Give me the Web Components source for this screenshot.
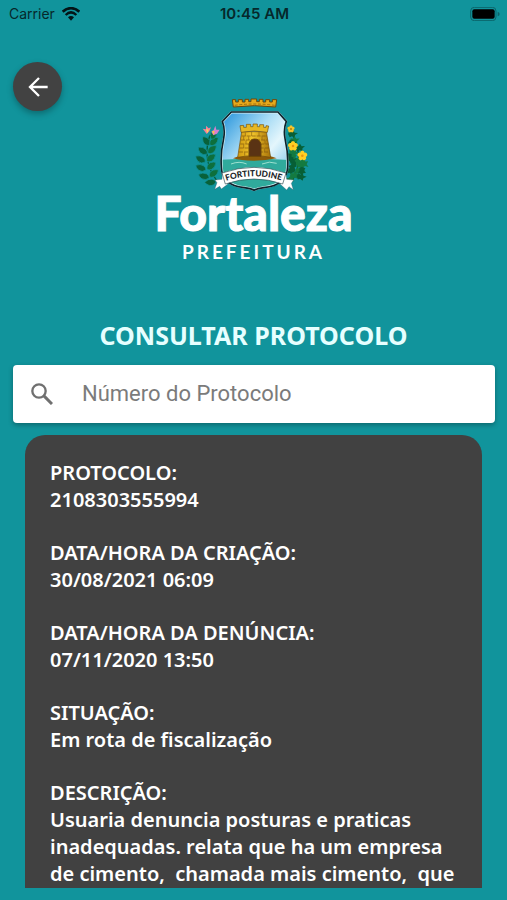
<!DOCTYPE html>
<html lang="pt-BR">
<head>
<meta charset="utf-8">
<meta name="viewport" content="width=device-width, initial-scale=1">
<title>Consultar Protocolo</title>
<style>
  html, body { height: 100%; }
  body { margin: 0; background: #11949c; font-family: "Noto Sans", "Open Sans", sans-serif; }
</style>
</head>
<body>
<protocol-screen>
  <status-bar slot="status" carrier="Carrier" time="10:45 AM"></status-bar>
  <back-button slot="back" label="Voltar"></back-button>
  <city-logo slot="logo"></city-logo>
  <span slot="title">CONSULTAR PROTOCOLO</span>
  <search-field slot="search" label="Número do Protocolo"></search-field>
  <protocol-card>
    <protocol-entry label="PROTOCOLO:">2108303555994</protocol-entry>
    <protocol-entry label="DATA/HORA DA CRIAÇÃO:">30/08/2021 06:09</protocol-entry>
    <protocol-entry label="DATA/HORA DA DENÚNCIA:">07/11/2020 13:50</protocol-entry>
    <protocol-entry label="SITUAÇÃO:">Em rota de fiscalização</protocol-entry>
    <protocol-entry label="DESCRIÇÃO:">Usuaria denuncia posturas e praticas inadequadas. relata que ha um empresa de cimento,&nbsp; chamada mais cimento,&nbsp; que</protocol-entry>
  </protocol-card>
</protocol-screen>

<script>
const define = (name, render) => customElements.define(name, class extends HTMLElement {
  connectedCallback() {
    if (this.shadowRoot) return;
    this.attachShadow({ mode: "open" }).innerHTML = render(this);
  }
});

define("protocol-screen", () => `
  <style>
    :host { display: flex; flex-direction: column; height: 100vh; box-sizing: border-box; padding-bottom: 12px; }
    header { display: grid; grid-template-columns: 1fr auto 1fr; align-items: start; padding: 35px 13px 0; }
    .logo { padding-top: 28px; }
    h1 { margin: 54px 13px 13px; font-size: 25px; line-height: 34px; font-weight: 700; text-align: center; color: #e6ffff; }
    .search { padding: 0 12px 12px 13px; }
    main { flex: 1; min-height: 0; margin: 0 25px; overflow-y: auto; scrollbar-width: none; }
  </style>
  <slot name="status"></slot>
  <header>
    <slot name="back"></slot>
    <div class="logo"><slot name="logo"></slot></div>
  </header>
  <h1><slot name="title"></slot></h1>
  <div class="search"><slot name="search"></slot></div>
  <main><slot></slot></main>`);

define("status-bar", el => `
  <style>
    :host { display: grid; grid-template-columns: 1fr auto 1fr; align-items: center; height: 27px; padding: 0 7px 0 9px;
            font-family: Inter, "Liberation Sans", sans-serif; font-size: 14px; line-height: 20px; color: #06282b; }
    .left { display: flex; align-items: center; gap: 7px; }
    .time { font-size: 15px; font-weight: 600; }
    .battery { justify-self: end; }
    svg { display: block; }
  </style>
  <div class="left"><span>${el.getAttribute("carrier")}</span>
    <svg width="18" height="14" viewBox="0 0 54 42" role="img" aria-label="Wi-Fi">
      <path d="M2 14C17 0 37 0 52 14" fill="none" stroke="#031416" stroke-width="8"/>
      <path d="M11 24C21 14 33 14 43 24" fill="none" stroke="#031416" stroke-width="7"/>
      <path d="M18 31C23 26 31 26 36 31L27 41Z" fill="#031416"/>
    </svg>
  </div>
  <span class="time">${el.getAttribute("time")}</span>
  <svg class="battery" width="30" height="14" viewBox="0 0 90 42" role="img" aria-label="Bateria">
    <rect x="2" y="1" width="76" height="40" rx="11" fill="none" stroke="#0b646a" stroke-width="3"/>
    <rect x="7" y="7" width="67" height="28" rx="6" fill="#000"/>
    <path d="M83 14Q89 16 89 21Q89 26 83 28Z" fill="#0b646a"/>
  </svg>`);

define("back-button", el => `
  <style>
    :host { display: block; }
    button { display: grid; place-items: center; width: 49px; height: 49px; padding: 0; border: 0; border-radius: 50%;
             background: #424242; box-shadow: 0 3px 6px rgba(0,0,0,.28); cursor: pointer; }
  </style>
  <button type="button" aria-label="${el.getAttribute("label")}">
    <svg width="20" height="20" viewBox="0 0 60 60" fill="none" stroke="#fff" stroke-width="7">
      <path d="M59 30H6M33 3L6 30L33 57"/>
    </svg>
  </button>`);

define("city-logo", () => {
  const leaf = (x, y, a, c) => `<path transform="translate(${x} ${y}) rotate(${a})" d="M0 0Q6-13 20-11Q30-8 34-2Q24 9 12 8Q3 6 0 0Z" fill="${c}" stroke="#11949c" stroke-width="2"/>`;
  const ivy = (x, y, a, c) => `<path transform="translate(${x} ${y}) rotate(${a})" d="M0 0L4-9L11-6L16-13L20-4L30-3L21 3L20 11L12 7L5 10Z" fill="${c}"/>`;
  const flower = (x, y, c, m, s) => `<g transform="translate(${x} ${y}) scale(${s})">` +
    [0, 72, 144, 216, 288].map(a => `<ellipse cx="0" cy="-8" rx="7" ry="8" transform="rotate(${a})" fill="${c}"/>`).join("") +
    `<circle r="4" fill="${m}"/></g>`;
  const left = [[62,166,-125],[62,166,-40],[54,192,-140],[56,190,-38],[48,216,-145],[52,214,-34],[50,240,-152],[53,238,-34],
    [60,263,-160],[60,260,-32],[80,276,-178],[66,148,-60]]
    .map(([x,y,a], i) => leaf(x, y, a, i % 2 ? "#0d6f3c" : "#08613a")).join("");
  const right = [[296,132,0],[302,154,-10],[302,150,60],[300,182,20],[318,176,-10],[314,190,100],[302,210,20],[324,204,75],
    [318,220,130],[322,222,10],[318,238,160],[318,240,10],[340,230,100],[302,258,-10],[322,258,10],[312,264,150],[298,190,80],[336,210,50]]
    .map(([x,y,a], i) => ivy(x, y, a, i % 2 ? "#147a40" : "#075f36")).join("");
  return `
  <style>
    :host { display: flex; flex-direction: column; align-items: center; color: #fff; font-family: Lato, sans-serif; }
    svg { display: block; }
    .city { font-size: 48px; line-height: 42px; font-weight: 900; -webkit-text-stroke: 1px #fff; }
    .office { margin-top: 6px; font-size: 19px; line-height: 24px; font-weight: 700; letter-spacing: 3px; }
  </style>
  <svg width="130" height="102" viewBox="-4 0 390 306" role="img" aria-label="Brasão de Fortaleza">
    <defs>
      <linearGradient id="sky" x1="0" y1="0" x2="1" y2="1">
        <stop offset="0" stop-color="#168bd8"/><stop offset=".4" stop-color="#a9dcf5"/><stop offset=".6" stop-color="#e4f6fc"/><stop offset="1" stop-color="#4fb0e6"/>
      </linearGradient>
      <linearGradient id="stone" x1="0" x2="1">
        <stop offset="0" stop-color="#d09a10"/><stop offset=".45" stop-color="#f1c52c"/><stop offset="1" stop-color="#a87309"/>
      </linearGradient>
      <clipPath id="shield"><path d="M126 67H266L290 94Q281 117 286 145Q296 190 294 230Q292 284 224 292Q204 294 194 300Q184 294 164 292Q98 284 97 230Q94 190 104 145Q109 117 100 94Z"/></clipPath>
      <path id="motto" d="M106 274Q194 244 280 273"/>
    </defs>
    <path d="M62 135Q36 210 84 274" fill="none" stroke="#075c35" stroke-width="4"/>
    <path d="M302 120Q350 200 308 274" fill="none" stroke="#075c35" stroke-width="4"/>
    ${left}${right}
    <path d="M52 132L40 116L50 118L50 107L58 115L65 112L60 124Z" fill="#f3819c"/><path d="M50 117L58 119L54 130Z" fill="#ffd84f"/>
    <path d="M72 136L66 125L73 120L78 107L81 119L91 119L83 131Z" fill="#d77fd0"/><path d="M68 122L76 124L73 134Z" fill="#ffc93e"/>
    ${flower(305,117,"#f5c52c","#a77908",.7)}${flower(311,168,"#ffce25","#e99510",.95)}${flower(339,197,"#ffce25","#e99510",.95)}
    <path d="M129 29H139V36H147V29H159V36H167V28H178V35H185V27H202V35H210V28H221V36H229V29H241V36H249V29H262L259 51Q195 43 132 51Z" fill="#e6a91b" stroke="#704609" stroke-width="3"/>
    <path d="M136 46Q195 38 256 46" fill="none" stroke="#79500d" stroke-width="2" stroke-dasharray="9 5"/>
    <g clip-path="url(#shield)">
      <path d="M90 60H300V310H90Z" fill="url(#sky)"/>
      <path d="M90 210Q190 202 300 210V310H90Z" fill="#30aa9c"/>
      <path d="M125 222Q150 212 172 222M218 222Q240 212 262 220" fill="none" stroke="#9ee0cf" stroke-width="3"/>
      <path d="M131 205Q151 194 194 195Q242 194 262 205Q230 212 194 212Q153 212 131 205Z" fill="#8d5b0a"/>
    </g>
    <path d="M126 67H266L290 94Q281 117 286 145Q296 190 294 230Q292 284 224 292Q204 294 194 300Q184 294 164 292Q98 284 97 230Q94 190 104 145Q109 117 100 94Z" fill="none" stroke="#d5eef4" stroke-width="7"/>
    <path d="M126 66H266L291 94Q282 117 287 145Q297 190 295 230Q293 285 224 293Q204 295 194 301Q184 295 164 293Q97 285 96 230Q93 190 103 145Q108 117 99 94Z" fill="none" stroke="#0c222b" stroke-width="5"/>
    <path d="M157 125L231 125L244 202Q194 192 145 202Z" fill="url(#stone)" stroke="#6f4907" stroke-width="2"/>
    <path d="M152 107L163 106V112H171V103H184V110H191V102H204V110H211V104H223V112H230V107L238 108L234 127Q194 119 155 127Z" fill="#e7b824" stroke="#76500b" stroke-width="2"/>
    <path d="M157 138H233M155 150H235M153 162H237M151 174H239M149 186H241" stroke="#7e560c" stroke-width="2" stroke-dasharray="12 3"/>
    <path d="M168 127V138M187 126V138M209 126V138M163 139V150M178 139V150M218 139V150M170 151V162M227 151V162M163 163V174M226 175V186M166 187V197" stroke="#8f6310" stroke-width="2"/>
    <path d="M179 199V163Q182 147 196 147Q211 147 215 163V199Z" fill="#5a3314" stroke="#6b4508" stroke-width="3"/>
    <path d="M99 247L116 282L96 297L91 289L76 298L83 278L77 270L98 268Z" fill="#fff" stroke="#2d5360" stroke-width="1"/>
    <path d="M289 247L272 282L292 300L299 290L312 299L306 280L313 270L292 268Z" fill="#fff" stroke="#2d5360" stroke-width="1"/>
    <path d="M98 249Q194 215 290 249L280 282Q194 252 108 282Z" fill="#fff" stroke="#2a4a50" stroke-width="2"/>
    <text fill="#202426" font-family="Lato, sans-serif" font-weight="900" font-size="25"><textPath href="#motto" startOffset="50%" text-anchor="middle">FORTITUDINE</textPath></text>
  </svg>
  <span class="city">Fortaleza</span>
  <span class="office">PREFEITURA</span>`;
});

define("search-field", el => `
  <style>
    :host { display: block; }
    label { display: flex; align-items: center; gap: 29px; height: 58px; padding: 0 18px; border-radius: 4px;
            background: #fff; box-shadow: 0 2px 5px rgba(0,0,0,.3); }
    svg { flex: none; }
    input { flex: 1; min-width: 0; padding: 0; border: 0; outline: 0; background: none; font: 22px/28px Roboto, "Liberation Sans", sans-serif; color: #333; }
    input::placeholder { color: #7b7b7b; opacity: 1; }
  </style>
  <label>
    <svg width="22" height="22" viewBox="0 0 66 66" fill="none" stroke="#707070" aria-hidden="true">
      <circle cx="24" cy="24" r="20" stroke-width="7"/><path d="M38 38L63 63" stroke-width="9"/>
    </svg>
    <input type="text" aria-label="${el.getAttribute("label")}" placeholder="${el.getAttribute("label")}">
  </label>`);

define("protocol-card", () => `
  <style>
    :host { display: flex; flex-direction: column; gap: 26px; padding: 24px 20px 25px 25px; border-radius: 20px; background: #414141; color: #fff; }
  </style>
  <slot></slot>`);

define("protocol-entry", el => `
  <style>
    :host { display: block; font-size: 20px; line-height: 27px; font-weight: 600; }
    dl, dd { margin: 0; }
  </style>
  <dl><dt>${el.getAttribute("label")}</dt><dd><slot></slot></dd></dl>`);
</script>
</body>
</html>
